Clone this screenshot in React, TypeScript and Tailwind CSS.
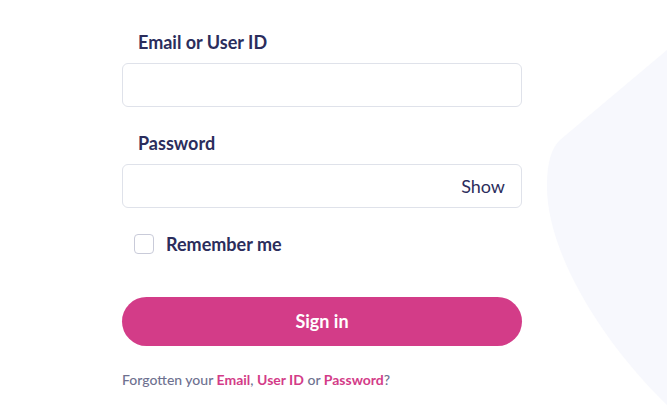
import React from "react";

const font = { fontFamily: "Lato, 'Noto Sans', sans-serif" };

function Field({ label, right }: { label: string; right?: string }) {
  return (
    <div className="flex flex-col">
      <label className="pl-4 text-[18px] font-bold leading-6 text-[#2b2d5c]">{label}</label>
      <div className="mt-[9px] flex h-[44px] items-center justify-end rounded-md border border-[#dfe2ea] bg-white px-4">
        {right && <span className="text-[18px] text-[#2b2d5c]">{right}</span>}
      </div>
    </div>
  );
}

export default function App() {
  return (
    <div className="relative h-[419px] w-[667px] overflow-hidden bg-white" style={font}>
      <svg className="pointer-events-none absolute inset-0" width="667" height="419" viewBox="0 0 667 419">
        <path
          d="M667 50 L560 140 Q547 152 547 185 C546 250 600 340 667 405 Z"
          fill="#f7f8fd"
        />
      </svg>
      <div className="relative ml-[122px] flex w-[400px] flex-col pt-[30px]">
        <Field label="Email or User ID" />
        <div className="mt-6">
          <Field label="Password" right="Show" />
        </div>
        <label className="mt-6 flex h-6 items-center gap-3 pl-3">
          <span className="h-5 w-5 rounded border border-[#c9cbd9] bg-white" />
          <span className="text-[18px] font-bold text-[#2b2d5c]">Remember me</span>
        </label>
        <button className="mt-[41px] h-[49px] w-full rounded-full bg-[#d33c88] text-[18px] font-bold text-white">
          Sign in
        </button>
        <p className="mt-6 text-[14px] font-medium leading-5 text-[#6e7190]">
          Forgotten your <span className="font-bold text-[#d33c88]">Email</span>,{" "}
          <span className="font-bold text-[#d33c88]">User ID</span> or{" "}
          <span className="font-bold text-[#d33c88]">Password</span>?
        </p>
      </div>
    </div>
  );
}
